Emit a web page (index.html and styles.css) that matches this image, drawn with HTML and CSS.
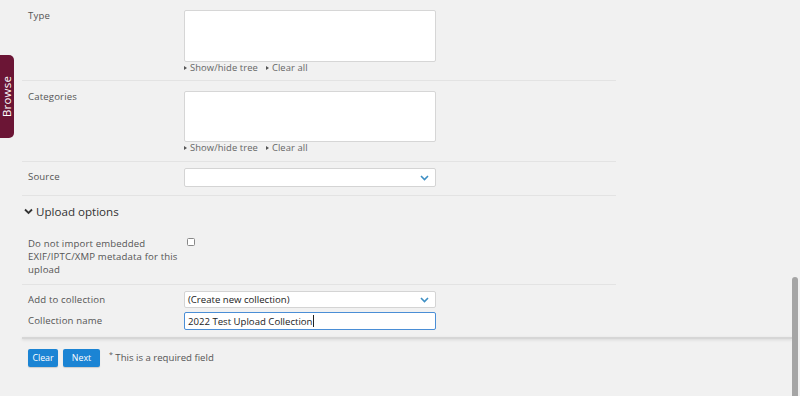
FILE: index.html
```html
<!DOCTYPE html>
<html>
<head>
<meta charset="utf-8">
<link rel="stylesheet" href="styles.css">
</head>
<body>
<div class="browse-tab"><span>Browse</span></div>
<div class="page">
  <div class="row row-type">
    <div class="label">Type</div>
    <div class="field">
      <div class="box"></div>
      <div class="links"><span class="lnk"><i class="tri"></i>Show/hide tree</span><span class="lnk"><i class="tri"></i>Clear all</span></div>
    </div>
  </div>
  <div class="row row-cat">
    <div class="label">Categories</div>
    <div class="field">
      <div class="box box2"></div>
      <div class="links"><span class="lnk"><i class="tri"></i>Show/hide tree</span><span class="lnk"><i class="tri"></i>Clear all</span></div>
    </div>
  </div>
  <div class="row row-source">
    <div class="label label-source">Source</div>
    <div class="field">
      <div class="select select-source"><span></span><svg class="chev" width="9" height="6" viewBox="0 0 9 6"><path d="M1 1l3.5 3.5L8 1" fill="none" stroke="#3d8fc4" stroke-width="1.6"/></svg></div>
    </div>
  </div>
  <div class="section-head"><svg width="9" height="7" viewBox="0 0 9 7"><path d="M1 1.5l3.5 3.5L8 1.5" fill="none" stroke="#333" stroke-width="1.8"/></svg><span>Upload options</span></div>
  <div class="row row-exif">
    <div class="label label-exif">Do not import embedded EXIF/IPTC/XMP metadata for this upload</div>
    <div class="field"><span class="checkbox"></span></div>
  </div>
  <div class="coll">
    <div class="crow">
      <div class="label">Add to collection</div>
      <div class="select select-coll"><span>(Create new collection)</span><svg class="chev" width="9" height="6" viewBox="0 0 9 6"><path d="M1 1l3.5 3.5L8 1" fill="none" stroke="#3d8fc4" stroke-width="1.6"/></svg></div>
    </div>
    <div class="crow">
      <div class="label">Collection name</div>
      <div class="input"><span>2022 Test Upload Collection</span><i class="caret"></i></div>
    </div>
  </div>
  <div class="divider"></div>
  <div class="footer">
    <button class="btn btn-clear">Clear</button>
    <button class="btn btn-next">Next</button>
    <span class="req"><sup>*</sup> This is a required field</span>
  </div>
</div>
<div class="scrollbar"></div>
</body>
</html>
```
FILE: styles.css
```css
html, body {
  margin: 0;
  padding: 0;
  background: #f1f1f1;
  height: 396px;
  overflow: hidden;
  font-family: "Open Sans", "DejaVu Sans", sans-serif;
  color: #555;
}
.page {
  width: 800px;
}
.row {
  margin-left: 22px;
  width: 588px;
  padding-left: 6px;
  display: grid;
  grid-template-columns: 156px 252px;
  border-bottom: 1px solid #e3e3e3;
}
.label {
  font-size: 9.6px;
  line-height: 12px;
  color: #555;
  letter-spacing: 0.15px;
}
.row-type {
  padding-top: 10px;
  padding-bottom: 7px;
}
.row-cat {
  padding-top: 10px;
  padding-bottom: 8px;
}
.box {
  height: 50px;
  background: #fff;
  border: 1px solid #d6d6d6;
  border-radius: 2px;
}
.box2 { height: 49px; }
.links {
  height: 11px;
  display: flex;
  align-items: center;
  gap: 8px;
  font-size: 9.4px;
  color: #666;
  letter-spacing: 0.1px;
}
.lnk { display: flex; align-items: center; }
.tri {
  display: inline-block;
  width: 0;
  height: 0;
  border-left: 3px solid #555;
  border-top: 2.5px solid transparent;
  border-bottom: 2.5px solid transparent;
  margin-right: 3px;
}
.row-source {
  padding-top: 6px;
  padding-bottom: 8px;
}
.label-source { padding-top: 3px; }
.select {
  box-sizing: border-box;
  background: #fff;
  border: 1px solid #d4d4d4;
  border-radius: 2px;
  display: flex;
  align-items: center;
  justify-content: space-between;
  padding: 0 6px 0 3px;
  font-size: 9.6px;
  color: #222;
  width: 252px;
}
.select-source { height: 19px; }
.select-coll { height: 17px; }
.section-head {
  margin-left: 24px;
  height: 30px;
  display: flex;
  align-items: center;
  gap: 3px;
  font-size: 11.6px;
  color: #333;
}
.section-head svg { margin-top: 1px; }
.row-exif {
  padding-top: 10px;
  padding-bottom: 8px;
}
.label-exif {
  width: 150px;
  line-height: 13px;
  padding-top: 1px;
}
.checkbox {
  display: block;
  width: 6px;
  height: 6px;
  border: 1px solid #888;
  border-radius: 1.5px;
  margin-left: 3px;
  margin-top: 2px;
  background: #fff;
}
.coll {
  margin-left: 22px;
  padding-left: 6px;
  width: 588px;
  padding-top: 6px;
  padding-bottom: 7px;
  display: flex;
  flex-direction: column;
  gap: 4px;
}
.crow {
  display: grid;
  grid-template-columns: 156px 252px;
  align-items: center;
}
.input {
  box-sizing: border-box;
  height: 18px;
  width: 252px;
  background: #fff;
  border: 1.5px solid #4a8ed6;
  border-radius: 2px;
  display: flex;
  align-items: center;
  padding-left: 3px;
  font-size: 9.6px;
  color: #222;
}
.caret {
  display: inline-block;
  width: 1px;
  height: 12px;
  background: #222;
  margin-left: 0.5px;
}
.divider {
  margin-left: 22px;
  width: 770px;
  height: 2px;
  background: #d6d6d6;
  box-shadow: 0 1px 3px rgba(0,0,0,0.12);
}
.footer {
  padding: 10px 0 0 28px;
  display: flex;
  align-items: flex-start;
  gap: 5px;
}
.btn {
  height: 18px;
  border: none;
  border-radius: 2px;
  background: #1b84d4;
  color: #fff;
  font-family: "Open Sans", "DejaVu Sans", sans-serif;
  font-size: 8.8px;
  padding: 0;
  box-shadow: 0 1px 1px rgba(0,0,0,0.15);
}
.btn-clear { width: 30px; }
.btn-next { width: 37px; }
.req {
  margin-left: 4px;
  font-size: 9.6px;
  color: #555;
  line-height: 17px;
}
.req sup { font-size: 7px; vertical-align: 4px; line-height: 0; }
.browse-tab {
  position: absolute;
  left: 0;
  top: 55px;
  width: 14px;
  height: 83px;
  background: #6b1535;
  border-radius: 0 5px 5px 0;
  display: flex;
  align-items: center;
  justify-content: center;
}
.browse-tab span {
  transform: rotate(-90deg);
  color: #fff;
  font-size: 11.5px;
  white-space: nowrap;
  letter-spacing: 0.2px;
}
.scrollbar {
  position: absolute;
  left: 792px;
  top: 277px;
  width: 6px;
  height: 130px;
  background: #a5a5a5;
  border-radius: 3px;
}
```
